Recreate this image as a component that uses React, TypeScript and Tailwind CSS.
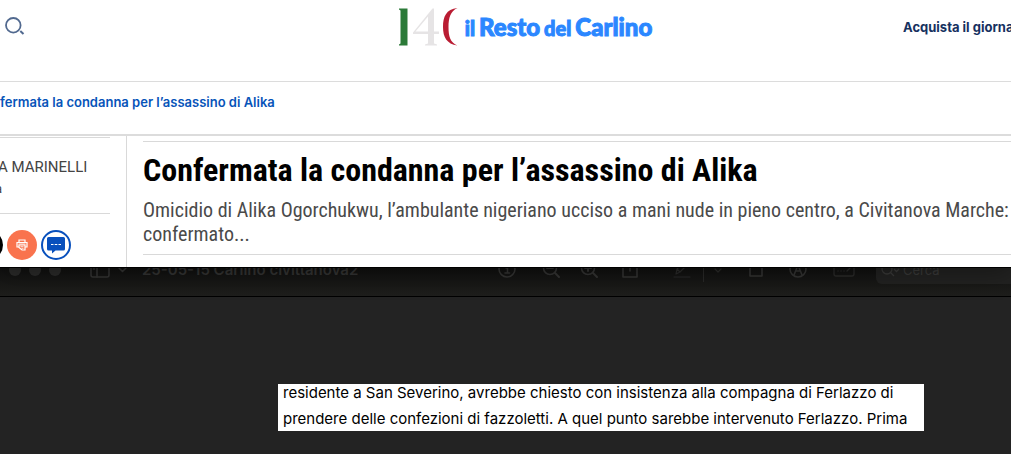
import React from "react";

function Logo() {
  return (
    <a href="#" aria-label="il Resto del Carlino" className="flex items-center gap-[6px]">
      <svg width="60" height="40" viewBox="0 0 60 40" aria-hidden="true">
        <path d="M0 1.500H8.500V38.500H0V37.500L1.500 36.500V3.500L0 2.500Z" fill="#2b7a38" />
        <path d="M35 1.500V24.500H40V27H35V36.500L38 37.500V38.500H26V37.500L29 36.500V27H14V25.500L33.500 1.500ZM29 9.500L16.500 24.500H29Z" fill="#e6e4e5" />
        <path d="M58.500 1C47 2 44 10 44 20S47.500 37 58.500 38.500C51 35.500 49.500 29 49.500 20S51.500 4 58.500 1Z" fill="#b91c32" />
      </svg>
      <span className="flex items-baseline gap-1 whitespace-nowrap font-['Lato',sans-serif] font-black leading-8 text-[#2b87ff] [-webkit-text-stroke:1px_#2b87ff]">
        <span className="text-[20px]">il</span>
        <span className="text-[24px]">Resto</span>
        <span className="text-[20px]">del</span>
        <span className="text-[24px]">Carlino</span>
      </span>
    </a>
  );
}

function SiteHeader() {
  return (
    <header className="grid h-[82px] grid-cols-[minmax(0,393fr)_auto_minmax(0,358fr)] items-start border-b border-[#dcdcdc] pl-[5px] pt-[7px]">
      <button aria-label="Cerca nel sito" className="mt-[10px] w-5">
        <svg width="20" height="20" viewBox="0 0 20 20" fill="none" stroke="#51698f" strokeWidth="1.800">
          <circle cx="8.300" cy="8.300" r="7.300" />
          <path d="M15.300 14L18.500 17" strokeWidth="2" />
        </svg>
      </button>
      <Logo />
      <a href="#" className="mt-[10px] w-[108px] justify-self-end overflow-hidden whitespace-nowrap font-['Inter',sans-serif] text-[13px] font-bold leading-5 text-[#16315f]">
        Acquista il giornale
      </a>
    </header>
  );
}

function ShareRow() {
  return (
    <div className="-ml-[27px] flex gap-1 pt-4">
      <button aria-label="Condividi" className="size-[30px] rounded-full bg-black" />
      <button aria-label="Stampa" className="flex size-[30px] items-center justify-center rounded-full bg-[#f9734e]">
        <svg width="12" height="12" viewBox="0 0 12 12" fill="none" stroke="#fff" strokeWidth="1.200">
          <path d="M3 3V1H9V3M3 8H1V3.500H11V8H9" />
          <path d="M3 6H9V11H6L3 8.500Z" fill="#f9734e" />
          <path d="M4.500 7.700H7.500M5.500 9.300H7.500M2.500 5H9.500" strokeWidth=".8" />
        </svg>
      </button>
      <button aria-label="Commenti" className="flex size-[30px] items-center justify-center rounded-full border-2 border-[#0850bd] bg-white">
        <svg width="18" height="17" viewBox="0 0 18 17">
          <path d="M1.500 0H16.500Q18 0 18 1.500V12Q18 13.500 16.500 13.500H8.500L5 16.500V13.500H1.500Q0 13.500 0 12V1.500Q0 0 1.500 0Z" fill="#0850bd" />
          <path d="M4 7.500H6.500M7.700 7.500H10.300M11.500 7.500H14" stroke="#fff" strokeWidth="1.200" />
        </svg>
      </button>
    </div>
  );
}

function Article() {
  return (
    <main className="flex h-[131px]">
      <aside className="w-[127px] shrink-0 overflow-hidden border-r border-[#d9d9d9] pr-4">
        <div className="mt-px border-y border-[#d9d9d9] pb-[13px] pt-[18px] font-['Roboto',sans-serif] text-[#444]">
          <p className="-ml-[2px] whitespace-nowrap text-[15px] leading-[22px]">A MARINELLI</p>
          <p className="-ml-[5px] text-[13px] leading-[22px]">a</p>
        </div>
        <ShareRow />
      </aside>
      <article className="ml-4 mt-[5px] h-[114px] min-w-0 flex-1 border-y border-[#d9d9d9] pt-2 font-['Roboto_Condensed','Roboto',sans-serif]">
        <h1 className="whitespace-nowrap text-[32px] font-bold leading-10 text-black">Confermata la condanna per l’assassino di Alika</h1>
        <p className="mt-2 text-[20px] leading-6 text-[#4a4a4a]">
          <span className="block whitespace-nowrap">Omicidio di Alika Ogorchukwu, l’ambulante nigeriano ucciso a mani nude in pieno centro, a Civitanova Marche:</span>
          <span className="block">confermato...</span>
        </p>
      </article>
    </main>
  );
}

function ToolIcon({ label, className, children }: { label: string; className: string; children: React.ReactNode }) {
  return (
    <button aria-label={label} className={className}>
      <svg width="22" height="20" viewBox="0 0 22 20" fill="none" stroke="currentColor" strokeWidth="1.600" strokeLinecap="round" strokeLinejoin="round">
        {children}
      </svg>
    </button>
  );
}

function Toolbar() {
  return (
    <div className="-mt-6 flex h-[54px] items-center overflow-hidden border-b border-black bg-linear-to-b from-[#10100f] from-45% to-[#1e1e1c] pl-[9px] text-[#343433]">
      <div className="flex gap-2">
        <span className="size-3 rounded-full bg-[#2b2b2a]" />
        <span className="size-3 rounded-full bg-[#2b2b2a]" />
        <span className="size-3 rounded-full bg-[#2b2b2a]" />
      </div>
      <ToolIcon label="Barra laterale" className="ml-7">
        <rect x="2" y="2" width="18" height="15" rx="2" />
        <path d="M8 2V17M4.500 6H5.500M4.500 9H5.500" />
      </ToolIcon>
      <ToolIcon label="Opzioni vista" className="ml-[1px]">
        <path d="M7 8L10.500 11.500L14 8" />
      </ToolIcon>
      <span className="ml-2 w-[345px] shrink-0 whitespace-nowrap font-['Inter',sans-serif] text-[15px] font-semibold leading-5">25-05-15 Carlino civittanova2</span>
      <ToolIcon label="Informazioni" className="ml-[9px]">
        <circle cx="11" cy="9" r="8" />
        <path d="M10 8H11.500V13M9 13H13.500M11 5V5.200" />
      </ToolIcon>
      <ToolIcon label="Riduci" className="ml-[22px]">
        <circle cx="10" cy="8" r="6.500" />
        <path d="M7 8H13M15 13L19 17" strokeWidth="2" />
      </ToolIcon>
      <ToolIcon label="Ingrandisci" className="ml-4">
        <circle cx="10" cy="8" r="6.500" />
        <path d="M7 8H13M10 5V11M15 13L19 17" strokeWidth="2" />
      </ToolIcon>
      <ToolIcon label="Condividi documento" className="ml-[19px]">
        <path d="M8 5H4V17H18V5H14M11 11V1M8 3.500L11 1L14 3.500" />
      </ToolIcon>
      <ToolIcon label="Evidenzia" className="ml-[30px] text-[#2b2b2a]">
        <path d="M3 17H19M5 14L6 9L13 2L16 5L9 12ZM6 9L9 12" strokeWidth="1.200" />
      </ToolIcon>
      <span className="ml-[10px] h-6 w-px bg-[#292928]" />
      <ToolIcon label="Colori" className="ml-[3px] text-[#2b2b2a]">
        <path d="M8 9L11 12L14 9" strokeWidth="1.200" />
      </ToolIcon>
      <ToolIcon label="Ruota" className="ml-4">
        <path d="M5 4V16H17V4Z" />
      </ToolIcon>
      <ToolIcon label="Annota" className="ml-5">
        <circle cx="11" cy="9" r="8" />
        <path d="M7 15L11 5L15 15M8.500 11H13.500" />
      </ToolIcon>
      <ToolIcon label="Modulo" className="ml-6 text-[#2b2b2a]">
        <path d="M15 3H3Q1 3 1 5V14Q1 16 3 16H19Q21 16 21 14V8M5 11H5.100M8 11H8.100M11 11H11.100M14 11L20 5" strokeWidth="1.300" />
      </ToolIcon>
      <label className="ml-[21px] flex h-7 min-w-0 flex-1 items-center rounded-l-md bg-[#222221] pl-1 text-[#3a3a39]">
        <svg width="20" height="18" viewBox="0 0 20 18" fill="none" stroke="currentColor" strokeWidth="1.300" className="shrink-0">
          <circle cx="7" cy="8" r="5" />
          <path d="M10.500 11.500L14 15M14 8L16.500 10.500L19 8" />
        </svg>
        <input aria-label="Cerca" placeholder="Cerca" className="ml-[3px] w-full min-w-0 bg-transparent font-['Inter',sans-serif] text-[13px] leading-5 outline-none placeholder:text-[#3a3a39]" />
      </label>
    </div>
  );
}

export default function App() {
  return (
    <div className="min-h-screen overflow-hidden bg-[#232323]">
      <div className="relative z-10 bg-white shadow-[0_1px_0_#000,0_4px_24px_rgba(0,0,0,0.4)]">
        <SiteHeader />
        <nav className="h-[54px] border-b-2 border-[#dcdcdc] pt-[10px] font-['Inter',sans-serif] text-[13px] font-semibold leading-5 text-[#0754b9]">
          <a href="#">fermata la condanna per l’assassino di Alika</a>
        </nav>
        <Article />
      </div>
      <Toolbar />
      <section className="px-[87px] pl-[278px] pt-[87px]">
        <p className="h-[47px] overflow-hidden whitespace-nowrap bg-white pl-[5px] font-['Inter',sans-serif] text-[15px] font-normal leading-[26px] text-black">
          <span className="-mt-1 block">residente a San Severino, avrebbe chiesto con insistenza alla compagna di Ferlazzo di</span>
          <span className="block">prendere delle confezioni di fazzoletti. A quel punto sarebbe intervenuto Ferlazzo. Prima</span>
        </p>
      </section>
    </div>
  );
}
